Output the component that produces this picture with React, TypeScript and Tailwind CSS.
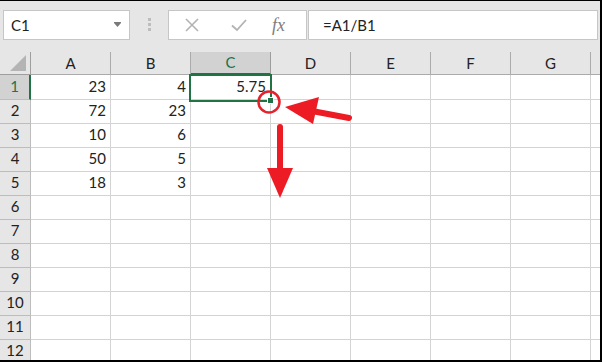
import React from 'react';

const cols = ['A', 'B', 'C', 'D', 'E', 'F', 'G', 'H'];
const rows: (string | null)[][] = [
  ['23', '4', '5.75'],
  ['72', '23'],
  ['10', '6'],
  ['50', '5'],
  ['18', '3'],
  [], [], [], [], [], [], [],
];

const font = { fontFamily: 'Lato, "Noto Sans", sans-serif' };

const App = () => {
  return (
    <div
      className="relative w-[602px] h-[362px] overflow-hidden bg-[#e6e6e6] border-t border-r-2 border-b-2 border-black text-[15px] text-[#222]"
      style={font}
    >
      {/* Toolbar */}
      <div className="flex items-start h-[51px] pt-[9px] pl-[3px] pr-[2px]">
        <div className="flex items-center justify-between w-[127px] h-[30px] bg-white border border-[#c6c6c6] pl-[7px] pr-[7px]">
          <span>C1</span>
          <svg width="9" height="6" viewBox="0 0 9 6">
            <rect x="1" y="0" width="7" height="1" fill="#7a7a7a" />
            <polygon points="1,1 8,1 4.5,5" fill="#7a7a7a" />
          </svg>
        </div>
        <div className="flex flex-col gap-[2px] w-[38px] items-center pt-[8px]">
          <div className="w-[3px] h-[3px] bg-[#bdbdbd]" />
          <div className="w-[3px] h-[3px] bg-[#bdbdbd]" />
          <div className="w-[3px] h-[3px] bg-[#bdbdbd]" />
        </div>
        <div className="flex items-center w-[139px] h-[30px] bg-white border border-[#c6c6c6]">
          <svg width="16" height="16" viewBox="0 0 16 16" className="ml-[15px]">
            <path d="M2 2 L14 14 M14 2 L2 14" stroke="#b3b3b3" strokeWidth="1.6" />
          </svg>
          <svg width="18" height="16" viewBox="0 0 18 16" className="ml-[30px]">
            <path d="M2 8.5 L7 13 L16 3" stroke="#b3b3b3" strokeWidth="1.8" fill="none" />
          </svg>
          <span
            className="ml-[24px] italic text-[18px] text-[#7d7d7d] leading-none"
            style={{ fontFamily: '"Liberation Serif", serif' }}
          >
            fx
          </span>
        </div>
        <div className="flex items-center ml-[1px] flex-1 h-[30px] bg-white border border-[#c6c6c6] pl-[14px]">
          =A1/B1
        </div>
      </div>

      {/* Column headers */}
      <div className="flex h-[23px]">
        <div className="relative w-[31px] shrink-0 border-r border-b border-[#9e9e9e]">
          <svg width="18" height="18" viewBox="0 0 18 18" className="absolute right-[3px] bottom-[2px]">
            <polygon points="17,1 17,17 1,17" fill="#b4b4b4" />
          </svg>
        </div>
        {cols.map((c) => (
          <div
            key={c}
            className={
              c === 'C'
                ? 'w-[80px] shrink-0 flex items-center justify-center bg-[#d2d2d2] border-r border-[#9e9e9e] border-b-2 border-b-[#217346] text-[#217346]'
                : 'w-[80px] shrink-0 flex items-center justify-center border-r border-b border-[#ababab]'
            }
          >
            {c === 'H' ? '' : c}
          </div>
        ))}
      </div>

      {/* Grid */}
      <div className="bg-white">
        {rows.map((r, i) => (
          <div key={i} className={i === 0 ? 'flex h-[25px]' : 'flex h-[24px]'}>
            <div
              className={
                i === 0
                  ? 'w-[31px] shrink-0 flex items-end justify-center pb-[2px] bg-[#d2d2d2] border-r-2 border-r-[#217346] border-b border-b-[#bdbdbd] text-[#217346]'
                  : 'w-[31px] shrink-0 flex items-end justify-center pb-[2px] bg-[#e6e6e6] border-r border-b border-[#bdbdbd]'
              }
            >
              {i + 1}
            </div>
            {cols.map((c, j) => (
              <div
                key={c}
                className="w-[80px] shrink-0 flex items-end justify-end pr-[4px] pb-[2px] border-r border-b border-[#d4d4d4]"
              >
                {r[j] ?? ''}
              </div>
            ))}
          </div>
        ))}
      </div>

      {/* Active cell selection */}
      <div className="absolute left-[189px] top-[73px] w-[83px] h-[28px] border-2 border-[#217346]" />
      <div className="absolute left-[267px] top-[96px] w-[7px] h-[7px] bg-white p-[1px]">
        <div className="w-full h-full bg-[#217346]" />
      </div>

      {/* Annotation */}
      <svg className="absolute inset-0 pointer-events-none" width="602" height="362" viewBox="0 0 602 362">
        <circle cx="269" cy="101" r="10.5" fill="none" stroke="#e5212b" strokeWidth="2.5" />
        <line x1="312" y1="110" x2="349" y2="117" stroke="#ed1c24" strokeWidth="6" strokeLinecap="round" />
        <polygon points="285,106 319,96 313,123" fill="#ed1c24" />
        <line x1="280" y1="126" x2="280" y2="170" stroke="#ed1c24" strokeWidth="6" strokeLinecap="round" />
        <polygon points="267,167 293,167 280,197" fill="#ed1c24" />
      </svg>
    </div>
  );
};

export default App;
